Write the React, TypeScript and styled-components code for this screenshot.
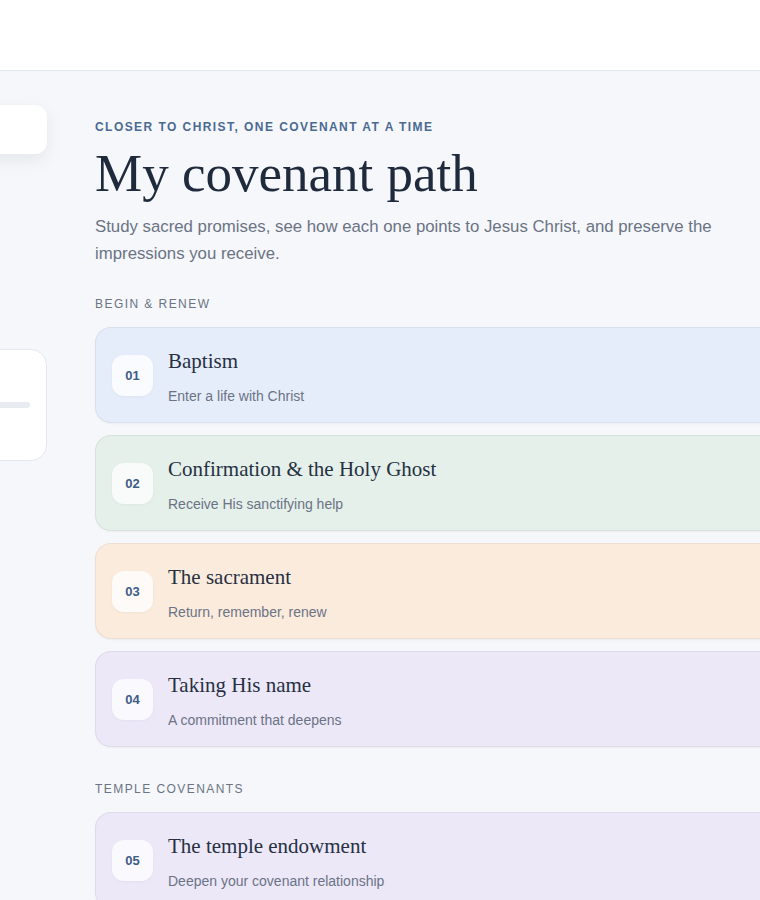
import React from 'react';
import styled, { createGlobalStyle } from 'styled-components';

const GlobalStyle = createGlobalStyle`
  html, body {
    margin: 0;
    padding: 0;
    background: #f5f7fa;
    overflow-x: hidden;
  }
  * {
    box-sizing: border-box;
  }
`;

type Tone = 'blue' | 'green' | 'peach' | 'lavender';

const tones: Record<Tone, string> = {
  blue: '#e6edfa',
  green: '#e4f0e9',
  peach: '#fbebdd',
  lavender: '#ece8f8',
};

const sections: { label: string; items: { num: string; title: string; sub: string; tone: Tone }[] }[] = [
  {
    label: 'Begin & Renew',
    items: [
      { num: '01', title: 'Baptism', sub: 'Enter a life with Christ', tone: 'blue' },
      { num: '02', title: 'Confirmation & the Holy Ghost', sub: 'Receive His sanctifying help', tone: 'green' },
      { num: '03', title: 'The sacrament', sub: 'Return, remember, renew', tone: 'peach' },
      { num: '04', title: 'Taking His name', sub: 'A commitment that deepens', tone: 'lavender' },
    ],
  },
  {
    label: 'Temple Covenants',
    items: [
      { num: '05', title: 'The temple endowment', sub: 'Deepen your covenant relationship', tone: 'lavender' },
    ],
  },
];

const App = () => {
  return (
    <>
      <GlobalStyle />
      <Header />

      <Shell>
        <Layout>
          <Sidebar>
            <BrandCard />
            <NavSpacer />
            <ProgressCard>
              <Track>
                <Fill style={{ width: '0%' }} />
              </Track>
            </ProgressCard>
          </Sidebar>

          <Main>
            <Eyebrow>Closer to Christ, one covenant at a time</Eyebrow>
            <Title>My covenant path</Title>
            <Lead>
              Study sacred promises, see how each one points to Jesus Christ, and preserve the
              impressions you receive.
            </Lead>

            {sections.map((section) => (
              <Section key={section.label}>
                <SectionLabel>{section.label}</SectionLabel>
                <CardList>
                  {section.items.map((item) => (
                    <CovenantCard key={item.num} $tone={item.tone}>
                      <Badge>{item.num}</Badge>
                      <CardText>
                        <CardTitle>{item.title}</CardTitle>
                        <CardSub>{item.sub}</CardSub>
                      </CardText>
                    </CovenantCard>
                  ))}
                </CardList>
              </Section>
            ))}
          </Main>
        </Layout>
      </Shell>
    </>
  );
};

const Header = styled.header`
  height: 71px;
  background: #ffffff;
  border-bottom: 1px solid #e3e7ee;
`;

const Shell = styled.div`
  display: flex;
  justify-content: center;
  overflow: hidden;
`;

const Layout = styled.div`
  flex: 0 0 1186px;
  display: grid;
  grid-template-columns: 260px 1fr;
  gap: 48px;
`;

const Sidebar = styled.aside`
  padding-top: 34px;
  display: flex;
  flex-direction: column;
`;

const BrandCard = styled.div`
  height: 49px;
  background: #ffffff;
  border-radius: 12px;
  box-shadow: 0 6px 18px rgba(15, 23, 42, 0.07);
`;

const NavSpacer = styled.nav`
  height: 195px;
`;

const ProgressCard = styled.div`
  height: 112px;
  background: #ffffff;
  border: 1px solid #e4e8ee;
  border-radius: 16px;
  padding: 52px 16px 0;
`;

const Track = styled.div`
  height: 6px;
  border-radius: 3px;
  background: #e8ebf0;
  overflow: hidden;
`;

const Fill = styled.div`
  height: 100%;
  background: #4b6a92;
`;

const Main = styled.main`
  padding-top: 48px;
  padding-bottom: 48px;
  font-family: 'Liberation Sans', sans-serif;
`;

const Eyebrow = styled.div`
  font-size: 12px;
  line-height: 16px;
  font-weight: 700;
  letter-spacing: 0.12em;
  text-transform: uppercase;
  color: #4b6a92;
`;

const Title = styled.h1`
  margin: 9px 0 10px;
  font-family: 'Liberation Serif', serif;
  font-weight: 400;
  font-size: 53px;
  line-height: 59px;
  color: #1f2a3d;
`;

const Lead = styled.p`
  margin: 0;
  max-width: 640px;
  font-size: 16.8px;
  line-height: 27px;
  color: #6b7385;
`;

const Section = styled.section`
  margin-top: 29px;

  & + & {
    margin-top: 34px;
  }
`;

const SectionLabel = styled.div`
  font-size: 12px;
  line-height: 16px;
  letter-spacing: 0.12em;
  text-transform: uppercase;
  color: #6b7385;
  margin-bottom: 15px;
`;

const CardList = styled.div`
  display: flex;
  flex-direction: column;
  gap: 12px;
`;

const CovenantCard = styled.div<{ $tone: Tone }>`
  height: 96px;
  display: flex;
  align-items: center;
  gap: 15px;
  padding: 0 16px;
  background: ${(p) => tones[p.$tone]};
  border: 1px solid rgba(15, 23, 42, 0.06);
  border-radius: 16px;
  box-shadow: 0 1px 2px rgba(15, 23, 42, 0.04);
`;

const Badge = styled.div`
  flex: 0 0 41px;
  height: 41px;
  border-radius: 12px;
  background: rgba(255, 255, 255, 0.75);
  box-shadow: 0 1px 3px rgba(15, 23, 42, 0.04);
  display: flex;
  align-items: center;
  justify-content: center;
  font-size: 13px;
  font-weight: 700;
  color: #3e5c86;
`;

const CardText = styled.div`
  display: flex;
  flex-direction: column;
  gap: 11px;
  padding-top: 2px;
`;

const CardTitle = styled.div`
  font-family: 'Liberation Serif', serif;
  font-size: 21px;
  line-height: 28px;
  color: #263042;
`;

const CardSub = styled.div`
  font-size: 14px;
  line-height: 20px;
  color: #6b7385;
`;

export default App;
